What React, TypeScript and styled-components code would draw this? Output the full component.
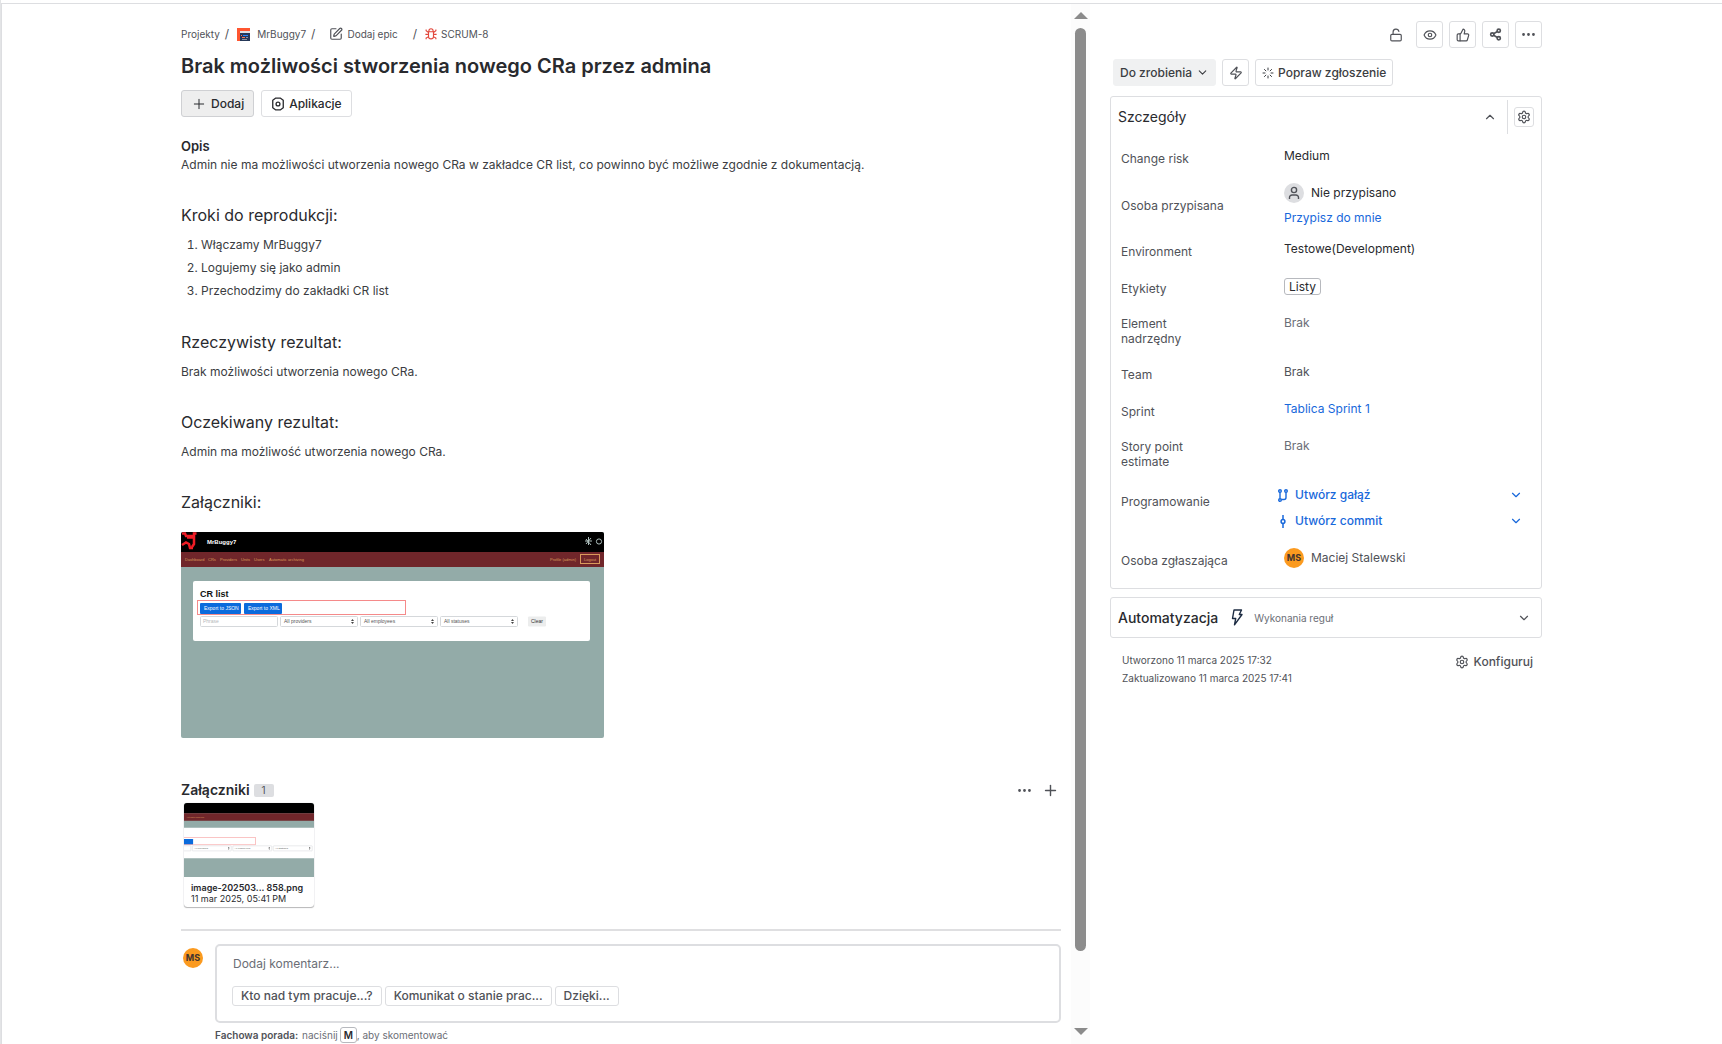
import React from "react";
import styled, { createGlobalStyle } from "styled-components";
import {
  ChevronDown, ChevronUp, Ellipsis, Eye, Loader, LockOpen, Plus, Settings, Share2, SquarePen, ThumbsUp, Zap,
} from "lucide-react";

const ink = "#292a2e";
const body = "#3b3d42";
const subtle = "#505258";
const muted = "#6b6e76";
const line = "#dddee1";
const blue = "#1868db";

const Global = createGlobalStyle`
  *, *::before, *::after { box-sizing: border-box; }
  body { margin: 0; background: #fff; color: ${ink}; font-family: Inter, "Noto Sans", sans-serif; font-size: 12px; line-height: 16px; }
  h1, h2, h3, p, ol, dl, dd, dt { margin: 0; padding: 0; font-weight: 400; }
  button, input { font: inherit; color: inherit; }
  a { color: inherit; text-decoration: none; }
  svg { display: block; flex: none; }
`;

const Page = styled.div`
  display: flex;
  min-height: 100vh;
  border-left: 1px solid #e3e4e6;
  padding-top: 3px;
`;
const Frame = styled.div`
  display: flex;
  flex: 1;
  min-width: 0;
  border-top: 1px solid ${line};
  border-left: 1px solid ${line};
`;
const Issue = styled.main`
  flex: 1;
  min-width: 0;
  padding: 21px 10px 0 179px;
`;
const Track = styled.div`
  width: 19px;
  display: flex;
  flex-direction: column;
  align-items: center;
  padding: 8px 0 9px;
  background: #fcfcfc;
`;
const Thumb = styled.div`
  flex: 923 1 0;
  width: 11px;
  margin-top: 9px;
  border-radius: 6px;
  background: #8b8b8b;
`;
const TrackRest = styled.div`
  flex: 77 1 0;
`;
const Aside = styled.aside`
  width: 632px;
  padding: 17px 180px 0 20px;
`;

const Crumbs = styled.nav`
  display: flex;
  align-items: center;
  height: 18px;
  font-size: 10px;
  color: ${subtle};
`;
const Crumb = styled.a<{ $gap?: number }>`
  display: flex;
  align-items: center;
  gap: ${(p) => p.$gap ?? 7}px;
`;
const Slash = styled.span<{ $before: number; $after: number }>`
  margin: 0 ${(p) => p.$after}px 0 ${(p) => p.$before}px;
  font-size: 12px;
`;
const Title = styled.h1`
  margin: 9px 0 10px;
  font-size: 20px;
  line-height: 28px;
  font-weight: 600;
`;
const Row = styled.div<{ $gap?: number }>`
  display: flex;
  align-items: center;
  gap: ${(p) => p.$gap ?? 0}px;
`;
const Button = styled.button<{ $fill?: string; $edge?: string; $h?: number; $pad?: number }>`
  display: inline-flex;
  align-items: center;
  justify-content: center;
  gap: 4px;
  height: ${(p) => p.$h ?? 27}px;
  padding: 0 ${(p) => p.$pad ?? 9}px;
  border: 1px solid ${(p) => p.$edge ?? line};
  border-radius: 3px;
  background: ${(p) => p.$fill ?? "#fff"};
  font-size: 12px;
  font-weight: 500;
  white-space: nowrap;
`;
const IconButton = styled(Button)`
  width: ${(p) => p.$h ?? 27}px;
  padding: 0;
  color: ${subtle};
`;
const GhostIcon = styled.button`
  display: flex;
  padding: 0;
  border: 0;
  background: none;
  color: ${subtle};
`;
const SmallHeading = styled.h2`
  margin-top: 20px;
  font-size: 13px;
  line-height: 18px;
  font-weight: 600;
`;
const Text = styled.p`
  color: ${body};
  line-height: 20px;
`;
const Section = styled.section`
  margin-top: 30px;
`;
const Heading = styled.h3`
  font-size: 16px;
  line-height: 20px;
  margin-bottom: 10px;
`;
const Steps = styled.ol`
  display: grid;
  gap: 3px;
  padding: 0 0 1px 20px;
  color: ${body};
  line-height: 20px;
`;
const Screenshot = styled.svg`
  width: 423px;
  height: 206px;
  margin-top: 20px;
  border-radius: 2px;
`;
const AttachHead = styled.div`
  display: flex;
  align-items: center;
  gap: 9px;
  height: 20px;
  margin-top: 42px;
  padding-right: 2px;
`;
const AttachTitle = styled.h2`
  font-size: 14px;
  font-weight: 600;
`;
const Count = styled.span`
  margin-left: -5px;
  margin-right: auto;
  width: 20px;
  height: 13px;
  line-height: 13px;
  border-radius: 2px;
  background: #dddee1;
  color: ${subtle};
  font-size: 10px;
  text-align: center;
`;
const FileCard = styled.a`
  display: block;
  width: 130px;
  height: 104px;
  margin: 3px 0 0 3px;
  border-radius: 3px;
  overflow: hidden;
  box-shadow: 0 1px 1px rgba(30, 31, 33, 0.3), 0 0 1px rgba(30, 31, 33, 0.3);
  color: ${ink};
  font-size: 9px;
  line-height: 11px;
`;
const Thumbnail = styled.svg`
  width: 130px;
  height: 74px;
`;
const FileText = styled.span<{ $bold?: boolean }>`
  display: block;
  padding: 0 7px;
  white-space: nowrap;
  font-weight: ${(p) => (p.$bold ? 600 : 400)};
  &:first-of-type { margin-top: 5px; }
`;
const Divider = styled.hr`
  height: 2px;
  margin: 22px 0 13px;
  border: 0;
  background: #dfdfe1;
`;
const CommentRow = styled.div`
  display: grid;
  grid-template-columns: 34px minmax(0, 1fr);
`;
const Avatar = styled.span`
  display: flex;
  align-items: center;
  justify-content: center;
  width: 20px;
  height: 20px;
  border-radius: 50%;
  background: #fb9a1f;
  color: #43342f;
  font-size: 9px;
  font-weight: 700;
`;
const AvatarCell = styled.div`
  padding: 4px 0 0 2px;
`;
const Composer = styled.div`
  height: 79px;
  padding: 10px 15px;
  border: 2px solid ${line};
  border-radius: 5px;
`;
const CommentInput = styled.input`
  display: block;
  width: 100%;
  height: 16px;
  padding: 0 1px;
  border: 0;
  outline: 0;
  background: none;
  font-size: 12px;
  &::placeholder { color: ${muted}; opacity: 1; }
`;
const Suggestions = styled.div`
  display: flex;
  gap: 3px;
  margin-top: 14px;
  color: ${subtle};
`;
const Tip = styled.p`
  display: flex;
  align-items: center;
  height: 16px;
  margin-top: 4px;
  color: ${muted};
  font-size: 10px;
`;
const TipStrong = styled.strong`
  color: ${subtle};
  font-weight: 600;
  margin-right: 4px;
`;
const Key = styled.kbd`
  width: 17px;
  height: 16px;
  line-height: 14px;
  margin-left: 2px;
  border: 1px solid #b7b9be;
  border-radius: 3px;
  text-align: center;
  font-family: inherit;
  font-weight: 600;
  color: ${ink};
`;

const TopActions = styled.div`
  display: flex;
  align-items: center;
  justify-content: flex-end;
  gap: 6px;
`;
const LockSlot = styled.span`
  margin-right: 7px;
  color: ${subtle};
`;
const StatusRow = styled.div`
  display: flex;
  gap: 6px;
  margin: 11px 0 10px 3px;
  color: ${body};
`;
const Panel = styled.section`
  border: 1px solid ${line};
  border-radius: 3px;
`;
const PanelHead = styled.div`
  display: flex;
  align-items: center;
  height: 40px;
  padding: 0 7px;
`;
const PanelTitle = styled.h2`
  font-size: 14px;
  font-weight: 400;
  margin-right: auto;
`;
const Rule = styled.span`
  width: 1px;
  height: 34px;
  margin: 0 6px 0 10px;
  background: ${line};
`;
const Fields = styled.dl`
  display: grid;
  gap: 18px;
  padding: 11px 18px 19px 10px;
`;
const Field = styled.div`
  display: grid;
  grid-template-columns: 157px minmax(0, 1fr);
`;
const Label = styled.dt<{ $wrap?: boolean; $middle?: boolean; $top?: number }>`
  padding: ${(p) => (p.$wrap ? 1 : p.$top ?? 3)}px 0 ${(p) => (p.$wrap ? 0 : 1)}px;
  max-width: ${(p) => (p.$wrap ? "80px" : "none")};
  align-self: ${(p) => (p.$middle ? "center" : "start")};
  line-height: 15px;
  color: ${subtle};
`;
const Value = styled.dd<{ $tone?: string }>`
  height: 16px;
  padding-left: 6px;
  color: ${(p) => p.$tone ?? ink};
`;
const Person = styled.div`
  display: flex;
  align-items: center;
  gap: 7px;
  height: 16px;
`;
const Nobody = styled(Avatar)`
  background: #dddee1;
  color: ${subtle};
`;
const AssignLink = styled.a`
  display: block;
  margin-top: 9px;
  color: ${blue};
`;
const Tall = styled.dd`
  height: 38px;
  padding-left: 6px;
`;
const Tag = styled.span`
  display: block;
  width: max-content;
  height: 17px;
  line-height: 15px;
  padding: 0 4px;
  border: 1px solid #b7b9be;
  border-radius: 3px;
`;
const DevList = styled.dd`
  display: grid;
  gap: 10px;
  padding-bottom: 3px;
  color: ${blue};
`;
const DevItem = styled.div`
  display: grid;
  grid-template-columns: 17px 1fr auto;
  align-items: center;
  height: 16px;
  font-weight: 500;
`;
const Automation = styled(Panel)`
  display: flex;
  align-items: center;
  height: 41px;
  margin-top: 8px;
  padding: 0 10px 0 7px;
`;
const AutoTitle = styled.h2`
  font-size: 14px;
  font-weight: 500;
  margin-right: 13px;
`;
const AutoNote = styled.span`
  margin: 0 auto 0 11px;
  font-size: 10px;
  color: ${muted};
`;
const Footer = styled.footer`
  display: flex;
  justify-content: space-between;
  align-items: flex-start;
  padding: 13px 9px 0 12px;
  font-size: 10px;
  line-height: 18px;
  color: ${subtle};
`;
const Configure = styled(GhostIcon)`
  align-items: center;
  gap: 5px;
  padding-top: 2px;
  font-size: 12px;
  font-weight: 500;
  line-height: 18px;
`;

const Hexagon = () => (
  <svg width="14" height="14" viewBox="0 0 16 16" fill="none" stroke="currentColor" strokeWidth="1.5" strokeLinejoin="round">
    <path d="M5.500 1.200h5l3.500 2.600v8.400l-3.500 2.600h-5L2 12.200V3.800z" />
    <circle cx="8" cy="8" r="2.200" />
  </svg>
);
const Bug = () => (
  <svg width="12" height="12" viewBox="0 0 16 16" fill="none" stroke="#e2483d" strokeWidth="1.5">
    <path d="M4.7 5h6.6v6.2a3.3 3.3 0 0 1-6.6 0zM5.2 5V3.8a2.8 2.8 0 0 1 5.6 0V5M.5 8.5h4.2M11.3 8.5h4.2M1.5 2v1.5L4.7 6M14.5 2v1.5L11.3 6M1.5 15v-1.500l3.200-2M14.5 15v-1.500l-3.200-2" />
  </svg>
);
const ProjectLogo = () => (
  <svg width="13" height="13" viewBox="0 0 13 13">
    <path fill="#ff5630" d="M0 0h13v13H0z" />
    <path fill="#253858" d="M3 3h10v10H3z" />
    <path fill="#dfe1e6" d="M3 3h10v2H3z" />
    <path fill="#2684ff" d="M6 7h5v1H6z" />
    <path fill="#ff7452" d="M4 7h1v1H4zM5 9h3v1H5z" />
    <path fill="#8993a4" d="M9 9h2v1H9zM5 11h5v1H5z" />
  </svg>
);
const Silhouette = () => (
  <svg width="12" height="14" viewBox="0 0 12 14" fill="none" stroke="currentColor" strokeWidth="1.4">
    <circle cx="6" cy="4" r="2.6" />
    <path d="M1.500 13v-1.500a2.500 2.500 0 0 1 2.500-2.500h4a2.500 2.500 0 0 1 2.500 2.500V13" />
  </svg>
);
const Branch = () => (
  <svg width="10" height="13" viewBox="0 0 10 13" fill="none" stroke="currentColor" strokeWidth="1.4">
    <circle cx="2" cy="2" r="1.3" />
    <circle cx="8" cy="2" r="1.3" />
    <circle cx="2" cy="11" r="1.3" />
    <path d="M2 3.300v6.400M8 3.300v5.200a2 2 0 0 1-2 2H3.300" />
  </svg>
);
const Commit = () => (
  <svg width="10" height="13" viewBox="0 0 10 13" fill="none" stroke="currentColor" strokeWidth="1.5">
    <circle cx="5" cy="6.5" r="1.9" />
    <path d="M5 0v4.600M5 8.400V13" />
  </svg>
);
const Bolt = () => (
  <svg width="12" height="17" viewBox="0 0 12 17" fill="none" stroke="#1c2b42" strokeWidth="1.4" strokeLinejoin="round">
    <path d="M3 1h7.500L8.300 5.500h2.700L3.500 15.800 4.700 9.500H1.500z" />
  </svg>
);
const Arrow = ({ down }: { down?: boolean }) => (
  <svg width="14" height="7" viewBox="0 0 14 7" fill="#8b8b8b" aria-hidden="true">
    <path d={down ? "M0 0h14L7 7z" : "M0 7h14L7 0z"} />
  </svg>
);

const selects = [
  { x: 99, label: "All providers" },
  { x: 179, label: "All employees" },
  { x: 259, label: "All statuses" },
];
const menu = [
  { x: 4, label: "Dashboard" },
  { x: 27, label: "CRs" },
  { x: 39, label: "Providers" },
  { x: 60, label: "Units" },
  { x: 73, label: "Users" },
  { x: 88, label: "Automatic archiving" },
];

/* The page in the attachment; `cropped` keeps only the texts that fit whole in the thumbnail. */
const AppPicture = ({ cropped }: { cropped?: boolean }) => (
  <g fontFamily="Liberation Sans, sans-serif" fontSize="5">
    <path fill="#93aba8" d="M0 0h424v207H0z" />
    <path fill="#000" d="M0 0h424v20H0z" />
    <path fill="#70262a" d="M0 20h424v15H0z" />
    <rect x="12" y="49" width="397" height="60" rx="2" fill="#fff" />
    <rect x="19" y="71" width="41" height="11" rx="1" fill="#0b6bdc" />
    <rect x="63" y="71" width="38" height="11" rx="1" fill="#0b6bdc" />
    <rect x="16.5" y="68.5" width="208" height="14" fill="none" stroke="#f58a8a" />
    <rect x="19.5" y="84.5" width="77" height="10" rx="1" fill="#fff" stroke="#d5d8db" />
    {menu.filter((m) => !cropped || m.x > 83).map((m) => (
      <text key={m.label} x={m.x} y="29" fontSize="4" fill="#d99a5b">{m.label}</text>
    ))}
    {selects.map((s) => (
      <g key={s.label}>
        <rect x={s.x + 0.5} y="84.5" width="77" height="10" rx="1" fill="#fff" stroke="#d5d8db" />
        <text x={s.x + 4} y="91" fill="#555">{s.label}</text>
        <path fill="#444" d={`M${s.x + 71} 89h3l-1.500-2zM${s.x + 71} 90h3l-1.500 2z`} />
      </g>
    ))}
    {!cropped && (
      <>
        <path fill="none" stroke="#ee1c25" strokeWidth="2.5" d="M1 1.500h3l1 2.500h8V1.500h2.500M6 5.500h7v6.500l-2 3M1 13l4-2.500 3 1.500 1 4h3" />
        <text x="26" y="12" fill="#fff" fontSize="6" fontWeight="700">MrBuggy7</text>
        <path fill="none" stroke="#aebfbd" d="M405 7l5 6M410 6l-5 6M407.500 5v8M404 9h7" />
        <circle cx="418" cy="9.5" r="2.6" fill="none" stroke="#aebfbd" />
        <text x="369" y="29" fontSize="4" fill="#d99a5b">Profile (admin)</text>
        <rect x="399.5" y="22.5" width="19" height="9" fill="none" stroke="#d99a5b" />
        <text x="403" y="29" fontSize="4" fill="#d99a5b">Logout</text>
        <text x="19" y="65" fill="#111" fontSize="9" fontWeight="700">CR list</text>
        <text x="23" y="78" fill="#fff">Export to JSON</text>
        <text x="67" y="78" fill="#fff">Export to XML</text>
        <text x="22" y="91" fill="#b4b8bb">Phrase</text>
        <rect x="347" y="84.5" width="18" height="10" rx="1" fill="#eceded" />
        <text x="350" y="91" fill="#333">Clear</text>
      </>
    )}
  </g>
);

export default function App() {
  return (
    <>
      <Global />
      <Page>
        <Frame>
          <Issue>
            <Crumbs aria-label="Ścieżka">
              <Crumb href="#">Projekty</Crumb>
              <Slash $before={5} $after={8}>/</Slash>
              <Crumb href="#"><ProjectLogo />MrBuggy7</Crumb>
              <Slash $before={5} $after={14}>/</Slash>
              <Crumb href="#" $gap={4}><SquarePen size={14} />Dodaj epic</Crumb>
              <Slash $before={15} $after={8}>/</Slash>
              <Crumb href="#" $gap={4}><Bug />SCRUM-8</Crumb>
            </Crumbs>
            <Title>Brak możliwości stworzenia nowego CRa przez admina</Title>
            <Row $gap={7}>
              <Button $fill="#eeeeee" $edge="#cfd0d3"><Plus size={16} strokeWidth={1.5} />Dodaj</Button>
              <Button><Hexagon />Aplikacje</Button>
            </Row>
            <SmallHeading>Opis</SmallHeading>
            <Text>Admin nie ma możliwości utworzenia nowego CRa w zakładce CR list, co powinno być możliwe zgodnie z dokumentacją.</Text>
            <Section>
              <Heading>Kroki do reprodukcji:</Heading>
              <Steps>
                <li>Włączamy MrBuggy7</li>
                <li>Logujemy się jako admin</li>
                <li>Przechodzimy do zakładki CR list</li>
              </Steps>
            </Section>
            <Section>
              <Heading>Rzeczywisty rezultat:</Heading>
              <Text>Brak możliwości utworzenia nowego CRa.</Text>
            </Section>
            <Section>
              <Heading>Oczekiwany rezultat:</Heading>
              <Text>Admin ma możliwość utworzenia nowego CRa.</Text>
            </Section>
            <Section>
              <Heading>Załączniki:</Heading>
              <Screenshot viewBox="0 0 423 206" role="img" aria-label="CR list"><AppPicture /></Screenshot>
            </Section>
            <AttachHead>
              <AttachTitle>Załączniki</AttachTitle>
              <Count>1</Count>
              <GhostIcon aria-label="Więcej"><Ellipsis size={17} /></GhostIcon>
              <GhostIcon aria-label="Dodaj załącznik"><Plus size={17} strokeWidth={2} /></GhostIcon>
            </AttachHead>
            <FileCard href="#">
              <Thumbnail viewBox="83 0 257 146" preserveAspectRatio="none" aria-hidden="true"><AppPicture cropped /></Thumbnail>
              <FileText $bold>image-202503... 858.png</FileText>
              <FileText>11 mar 2025, 05:41 PM</FileText>
            </FileCard>
            <Divider />
            <CommentRow>
              <AvatarCell><Avatar>MS</Avatar></AvatarCell>
              <div>
                <Composer>
                  <CommentInput placeholder="Dodaj komentarz..." aria-label="Dodaj komentarz" />
                  <Suggestions>
                    <Button $h={20} $pad={8}>Kto nad tym pracuje...?</Button>
                    <Button $h={20} $pad={8}>Komunikat o stanie prac...</Button>
                    <Button $h={20} $pad={8}>Dzięki...</Button>
                  </Suggestions>
                </Composer>
                <Tip><TipStrong>Fachowa porada:</TipStrong>naciśnij<Key>M</Key>, aby skomentować</Tip>
              </div>
            </CommentRow>
          </Issue>
          <Track aria-hidden="true">
            <Arrow />
            <Thumb />
            <TrackRest />
            <Arrow down />
          </Track>
          <Aside>
            <TopActions>
              <LockSlot><LockOpen size={14} /></LockSlot>
              <IconButton aria-label="Obserwuj"><Eye size={14} /></IconButton>
              <IconButton aria-label="Głosuj"><ThumbsUp size={14} /></IconButton>
              <IconButton aria-label="Udostępnij"><Share2 size={13} strokeWidth={3} /></IconButton>
              <IconButton aria-label="Czynności"><Ellipsis size={17} /></IconButton>
            </TopActions>
            <StatusRow>
              <Button $fill="#f0f1f2" $edge="#f0f1f2" $pad={6}>Do zrobienia<ChevronDown size={13} /></Button>
              <IconButton aria-label="Automatyzacja"><Zap size={14} /></IconButton>
              <Button $pad={6}><Loader size={12} />Popraw zgłoszenie</Button>
            </StatusRow>
            <Panel>
              <PanelHead>
                <PanelTitle>Szczegóły</PanelTitle>
                <GhostIcon aria-label="Zwiń"><ChevronUp size={14} /></GhostIcon>
                <Rule />
                <IconButton $h={20} aria-label="Ustawienia pól"><Settings size={14} /></IconButton>
              </PanelHead>
              <Fields>
                <Field><Label>Change risk</Label><Value>Medium</Value></Field>
                <Field>
                  <Label $middle>Osoba przypisana</Label>
                  <Tall>
                    <Person><Nobody><Silhouette /></Nobody>Nie przypisano</Person>
                    <AssignLink href="#">Przypisz do mnie</AssignLink>
                  </Tall>
                </Field>
                <Field><Label>Environment</Label><Value>Testowe(Development)</Value></Field>
                <Field><Label>Etykiety</Label><Value><Tag>Listy</Tag></Value></Field>
                <Field><Label $wrap>Element nadrzędny</Label><Value $tone={muted}>Brak</Value></Field>
                <Field><Label>Team</Label><Value $tone={subtle}>Brak</Value></Field>
                <Field><Label>Sprint</Label><Value $tone={blue}><a href="#">Tablica Sprint 1</a></Value></Field>
                <Field><Label $wrap>Story point estimate</Label><Value $tone={muted}>Brak</Value></Field>
                <Field>
                  <Label $top={7}>Programowanie</Label>
                  <DevList>
                    <DevItem><Branch /><a href="#">Utwórz gałąź</a><ChevronDown size={14} /></DevItem>
                    <DevItem><Commit /><a href="#">Utwórz commit</a><ChevronDown size={14} /></DevItem>
                  </DevList>
                </Field>
                <Field>
                  <Label>Osoba zgłaszająca</Label>
                  <Value $tone={subtle}><Person><Avatar>MS</Avatar>Maciej Stalewski</Person></Value>
                </Field>
              </Fields>
            </Panel>
            <Automation>
              <AutoTitle>Automatyzacja</AutoTitle>
              <Bolt />
              <AutoNote>Wykonania reguł</AutoNote>
              <GhostIcon aria-label="Rozwiń"><ChevronDown size={14} /></GhostIcon>
            </Automation>
            <Footer>
              <div>
                <p>Utworzono 11 marca 2025 17:32</p>
                <p>Zaktualizowano 11 marca 2025 17:41</p>
              </div>
              <Configure><Settings size={14} />Konfiguruj</Configure>
            </Footer>
          </Aside>
        </Frame>
      </Page>
    </>
  );
}
